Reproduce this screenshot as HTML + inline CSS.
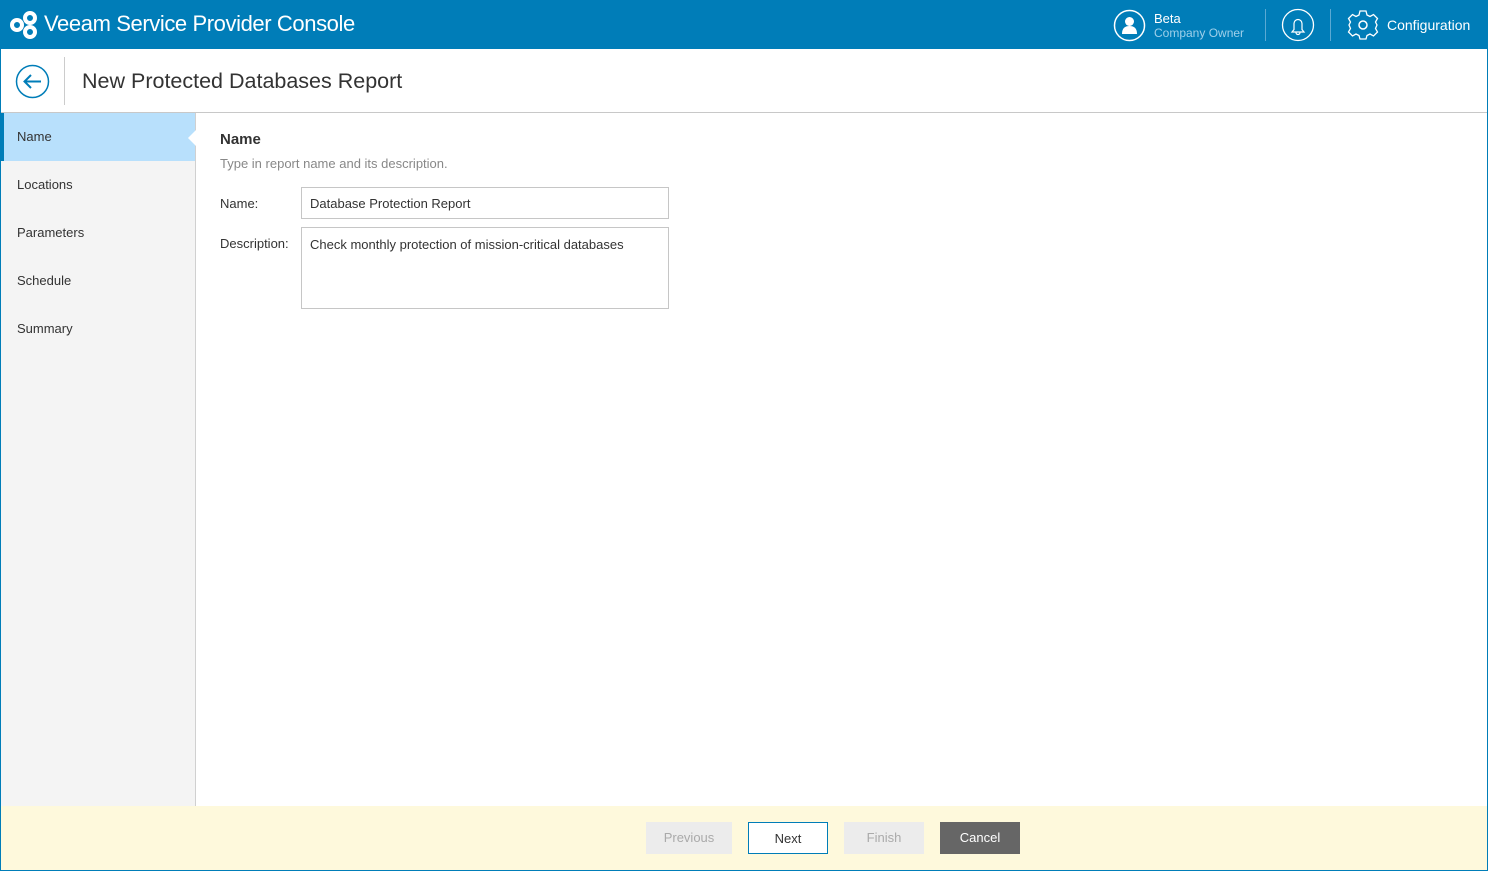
<!DOCTYPE html>
<html><head><style>
*{margin:0;padding:0;box-sizing:border-box}
body{width:1488px;height:871px;font-family:"Liberation Sans",sans-serif;background:#fff;position:relative;overflow:hidden}
.frame{position:absolute;left:0;top:0;width:1488px;height:871px;border:1px solid #007db8;border-top:0;pointer-events:none}
.top{position:absolute;left:0;top:0;width:1488px;height:49px;background:#007db8;color:#fff}
.title{position:absolute;left:44px;top:11px;font-size:22px;letter-spacing:-0.4px}
.hdr{position:absolute;left:0;top:49px;width:1488px;height:64px;border-bottom:1px solid #c8c8c8;background:#fff}
.side{position:absolute;left:0;top:113px;width:196px;height:693px;background:#f4f4f4;border-right:1px solid #d0d0d0}
.side div{height:48px;line-height:48px;padding-left:17px;font-size:13px;color:#333}
.side .act{background:#b8e0fc;border-left:4px solid #007db8;padding-left:13px;position:relative}
.side .act:after{content:"";position:absolute;right:-1px;top:17px;border:8px solid transparent;border-right-color:#fff}
.lbl{position:absolute;font-size:13px;color:#333}
.box{position:absolute;border:1px solid #c6c6c6;font-size:13px;color:#333;padding:0 8px}
.foot{position:absolute;left:0;top:806px;width:1488px;height:65px;background:#fef9dc}
.btn{position:absolute;top:16px;height:32px;line-height:32px;text-align:center;font-size:13px}
</style></head><body>
<div class="top">
<svg style="position:absolute;left:9px;top:10px" width="30" height="30" viewBox="0 0 30 30"><g fill="none" stroke="#fff" stroke-width="4"><circle cx="8" cy="15" r="5"/><circle cx="21" cy="8" r="5"/><circle cx="21" cy="22" r="5"/></g></svg>
<div class="title">Veeam Service Provider Console</div>
<svg style="position:absolute;left:1113px;top:9px" width="33" height="33" viewBox="0 0 33 33"><circle cx="16.5" cy="16.5" r="15" fill="none" stroke="#fff" stroke-width="1.5"/><circle cx="16.5" cy="12.5" r="4.5" fill="#fff"/><path d="M9 25c0-6 3-8 7.5-8s7.5 2 7.5 8z" fill="#fff"/></svg>
<div style="position:absolute;left:1154px;top:11px;font-size:13px">Beta</div>
<div style="position:absolute;left:1154px;top:26px;font-size:12px;color:#9fd0ea">Company Owner</div>
<div style="position:absolute;left:1265px;top:9px;width:1px;height:32px;background:#5aa9d3"></div>
<svg style="position:absolute;left:1281px;top:8px" width="34" height="34" viewBox="0 0 34 34"><circle cx="17" cy="17" r="15.5" fill="none" stroke="#fff" stroke-width="1.3"/><path d="M11 24h12l-2-2.5v-6a4 4 0 0 0-8 0v6zM15 24.5a2 2 0 0 0 4 0" fill="none" stroke="#fff" stroke-width="1.2"/></svg>
<div style="position:absolute;left:1330px;top:9px;width:1px;height:32px;background:#5aa9d3"></div>
<svg style="position:absolute;left:1346px;top:8px" width="34" height="34" viewBox="0 0 34 34"><path d="M14 3h6l1 4 3 1.5 3.5-2 4 4-2 3.5L31 17l-1.5 3.5 2 3.5-4 4-3.5-2L21 27.5 20 31h-6l-1-3.5L10 26l-3.5 2-4-4 2-3.5L3 17l1.5-3 -2-3.5 4-4 3.5 2L13 7z" fill="none" stroke="#fff" stroke-width="1.3"/><circle cx="17" cy="17" r="4" fill="none" stroke="#fff" stroke-width="1.5"/></svg>
<div style="position:absolute;left:1387px;top:17px;font-size:14px">Configuration</div>
</div>
<div class="hdr">
<svg style="position:absolute;left:15px;top:15px" width="35" height="35" viewBox="0 0 35 35"><circle cx="17.5" cy="17.5" r="16" fill="none" stroke="#007db8" stroke-width="1.5"/><path d="M26 17.5H10M16 11l-6.5 6.5L16 24" fill="none" stroke="#007db8" stroke-width="2"/></svg>
<div style="position:absolute;left:64px;top:8px;width:1px;height:48px;background:#ccc"></div>
<div style="position:absolute;left:82px;top:20px;font-size:21.5px;color:#333">New Protected Databases Report</div>
</div>
<div class="side"><div class="act">Name</div><div>Locations</div><div>Parameters</div><div>Schedule</div><div>Summary</div></div>
<div class="lbl" style="left:220px;top:131px;font-size:15px;font-weight:bold">Name</div>
<div class="lbl" style="left:220px;top:156px;color:#888">Type in report name and its description.</div>
<div class="lbl" style="left:220px;top:196px">Name:</div>
<div class="box" style="left:301px;top:187px;width:368px;height:32px;line-height:31px">Database Protection Report</div>
<div class="lbl" style="left:220px;top:236px">Description:</div>
<div class="box" style="left:301px;top:227px;width:368px;height:82px;padding-top:9px">Check monthly protection of mission-critical databases</div>
<div class="foot">
<div class="btn" style="left:646px;width:86px;background:#ececec;color:#aaa">Previous</div>
<div class="btn" style="left:748px;width:80px;background:#fff;border:1px solid #007db8;line-height:31px;color:#333">Next</div>
<div class="btn" style="left:844px;width:80px;background:#ececec;color:#aaa">Finish</div>
<div class="btn" style="left:940px;width:80px;background:#666;color:#fff">Cancel</div>
</div>
<div class="frame"></div>
</body></html>
